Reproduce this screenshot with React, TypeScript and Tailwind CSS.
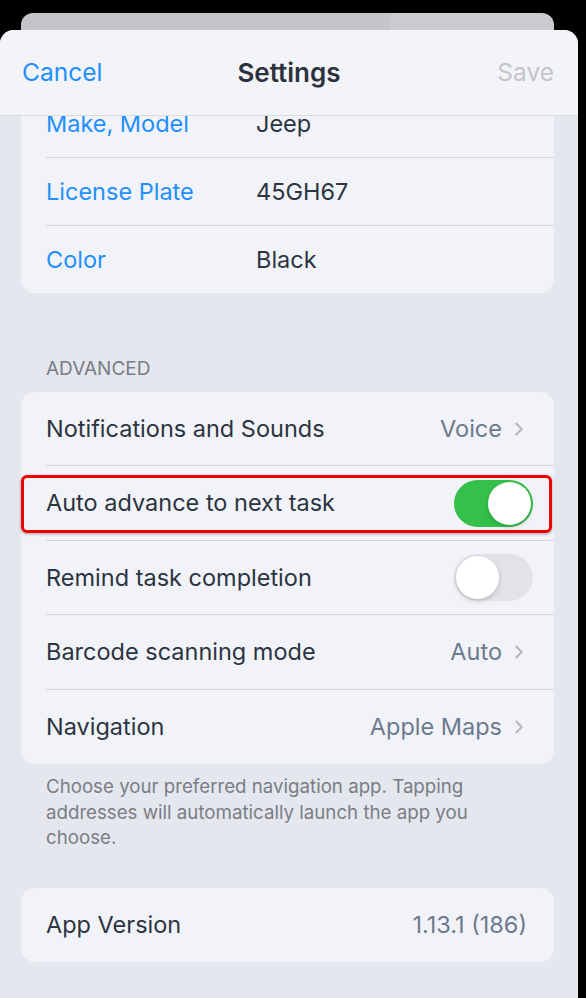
import { ChevronRight } from 'lucide-react';

const font = { fontFamily: 'Inter, "Noto Sans", sans-serif' };

// vehicle rows at the top of the sheet (partly scrolled under the header)
const vehicle = [
  { label: 'Make, Model', value: 'Jeep' },
  { label: 'License Plate', value: '45GH67' },
  { label: 'Color', value: 'Black' },
];

const Toggle = ({ on }: { on: boolean }) => (
  <div
    className={`flex h-[47px] w-[79px] items-center rounded-full p-[2px] ${
      on ? 'justify-end bg-[#34c04a]' : 'justify-start bg-[#e2e3e8]'
    }`}
  >
    <div className="h-[43px] w-[43px] rounded-full bg-white shadow-[0_2px_5px_rgba(0,0,0,0.18)]" />
  </div>
);

const Sep = () => <div className="ml-[25px] h-px bg-[#d3d5da]" />;

const LinkRow = ({ label, value, h }: { label: string; value: string; h: string }) => (
  <div className={`flex ${h} items-center justify-between pl-[25px] pr-[24px]`}>
    <span className="text-[23.5px] text-[#2b3441]">{label}</span>
    <div className="flex items-center gap-[6px]">
      <span className="text-[23.5px] text-[#6c7a8f]">{value}</span>
      <ChevronRight size={22} strokeWidth={2.2} className="text-[#b3b6bc]" />
    </div>
  </div>
);

export default function App() {
  return (
    <div className="flex h-[998px] w-[586px] overflow-hidden bg-black" style={font}>
      <div className="relative flex w-[578px] flex-col">
        {/* card peeking behind the sheet */}
        <div className="absolute left-[21px] top-[13px] flex h-[40px] w-[533px] overflow-hidden rounded-t-[12px]">
          <div className="w-[369px] bg-[#c3c5ca] shadow-[2px_0_3px_rgba(0,0,0,0.5)]" />
          <div className="flex-1 bg-[#cacbce]" />
        </div>

        <div className="relative mt-[30px] flex flex-1 flex-col overflow-hidden rounded-t-[14px] bg-[#e4e7ee]">
          {/* header */}
          <div className="relative z-10 flex h-[86px] shrink-0 items-center justify-between border-b border-[#d9dbe0] bg-[#f3f4f8] px-[22px]">
            <span className="text-[24.5px] text-[#1f8fff]">Cancel</span>
            <span className="absolute left-0 right-0 text-center text-[26px] font-semibold text-[#2c323d]">
              Settings
            </span>
            <span className="pr-[2px] text-[24.5px] text-[#c4c5ca]">Save</span>
          </div>

          <div className="flex flex-col pl-[21px] pr-[24px]">
            {/* vehicle card */}
            <div className="-mt-[26px] rounded-[14px] bg-[#f2f3f8]">
              {vehicle.map((v, i) => (
                <div key={v.label}>
                  {i > 0 && <Sep />}
                  <div className="flex h-[67px] items-center pl-[25px]">
                    <span className="w-[210px] text-[23.5px] text-[#1f8fff]">{v.label}</span>
                    <span className="text-[23.5px] text-[#2b3441]">{v.value}</span>
                  </div>
                </div>
              ))}
            </div>

            <div className="mt-[67px] pl-[25px] text-[19px] leading-[18px] text-[#7a7d84]">ADVANCED</div>

            {/* advanced card */}
            <div className="mt-[14px] rounded-[14px] bg-[#f2f3f8]">
              <LinkRow label="Notifications and Sounds" value="Voice" h="h-[73px]" />
              <Sep />
              <div className="relative flex h-[74px] items-center justify-between pl-[25px] pr-[21px]">
                <span className="text-[23.5px] text-[#2b3441]">Auto advance to next task</span>
                <Toggle on />
                <div className="pointer-events-none absolute left-0 right-[2px] top-[9px] h-[58px] rounded-[6px] border-[3px] border-[#ee0000] shadow-[0_1px_3px_rgba(0,0,0,0.35)]" />
              </div>
              <Sep />
              <div className="flex h-[73px] items-center justify-between pl-[25px] pr-[21px]">
                <span className="text-[23.5px] text-[#2b3441]">Remind task completion</span>
                <Toggle on={false} />
              </div>
              <Sep />
              <LinkRow label="Barcode scanning mode" value="Auto" h="h-[74px]" />
              <Sep />
              <LinkRow label="Navigation" value="Apple Maps" h="h-[74px]" />
            </div>

            <p className="mt-[10px] pl-[25px] pr-[80px] text-[18.7px] leading-[25.5px] text-[#7a7d84]">
              Choose your preferred navigation app. Tapping addresses will automatically launch the app you choose.
            </p>

            {/* version */}
            <div className="mt-[37px] flex h-[74px] items-center justify-between rounded-[14px] bg-[#f2f3f8] pl-[25px] pr-[27px]">
              <span className="text-[23.5px] text-[#2b3441]">App Version</span>
              <span className="text-[23.5px] text-[#6c7a8f]">1.13.1 (186)</span>
            </div>
          </div>
        </div>
      </div>
    </div>
  );
}
